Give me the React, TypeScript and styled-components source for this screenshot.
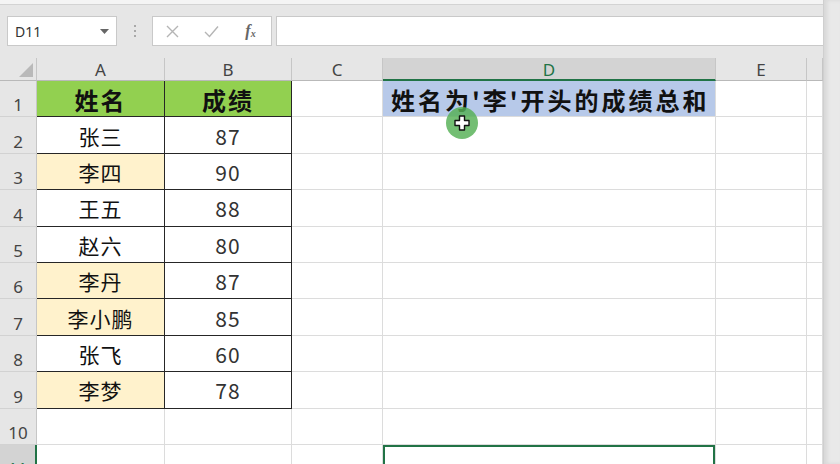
import React from 'react';
import styled, {createGlobalStyle} from 'styled-components';

const CJK = `'Noto Sans CJK SC', 'Noto Sans', sans-serif`;
const UI = `'Noto Sans', 'Liberation Sans', sans-serif`;
const GREEN = '#217346';

const GlobalStyle = createGlobalStyle`
  html, body {
    margin: 0;
    padding: 0;
    overflow: hidden;
    background: #e6e6e6;
  }
  * {
    box-sizing: border-box;
  }
`;

type Row = {name: string; score: string; li?: boolean};

const rows: Row[] = [
  {name: '张三', score: '87'},
  {name: '李四', score: '90', li: true},
  {name: '王五', score: '88'},
  {name: '赵六', score: '80'},
  {name: '李丹', score: '87', li: true},
  {name: '李小鹏', score: '85', li: true},
  {name: '张飞', score: '60'},
  {name: '李梦', score: '78', li: true},
];

const columns = ['A', 'B', 'C', 'D', 'E', ''];

const App: React.FC = () => {
  return (
    <>
      <GlobalStyle />
      <Window>
        <Main>
          <RibbonEdge />
          <FormulaBar>
            <NameBox>
              <span>D11</span>
              <svg width="9" height="5" viewBox="0 0 9 5">
                <polygon points="0,0 9,0 4.5,5" fill="#666" />
              </svg>
            </NameBox>
            <Grip>
              <i />
              <i />
              <i />
            </Grip>
            <FuncBox>
              <FuncIcon>
                <svg width="13" height="13" viewBox="0 0 13 13">
                  <path d="M1 1 L12 12 M12 1 L1 12" stroke="#b5b5b5" strokeWidth="1.4" fill="none" />
                </svg>
              </FuncIcon>
              <FuncIcon>
                <svg width="15" height="13" viewBox="0 0 15 13">
                  <path d="M1 7 L5.5 11.5 L14 1.5" stroke="#b5b5b5" strokeWidth="1.4" fill="none" />
                </svg>
              </FuncIcon>
              <FuncIcon>
                <FxLabel>
                  f<sub>x</sub>
                </FxLabel>
              </FuncIcon>
            </FuncBox>
            <FormulaInput />
          </FormulaBar>

          <Sheet>
            <Corner>
              <svg width="16" height="16" viewBox="0 0 16 16">
                <polygon points="15,1 15,15 1,15" fill="#b9b9b9" />
              </svg>
            </Corner>
            {columns.map((c, i) => (
              <ColHead key={i} $selected={c === 'D'}>
                {c}
              </ColHead>
            ))}

            {/* row 1: header */}
            <RowHead>1</RowHead>
            <Cell $fill="#92d050" $boxed $bold $size={24}>
              姓名
            </Cell>
            <Cell $fill="#92d050" $boxed $bold $size={24}>
              成绩
            </Cell>
            <Cell />
            <Cell $fill="#b7c9e9" $bold $size={24} $spacing={3} $align="left">
              姓名为'李'开头的成绩总和
            </Cell>
            <Cell />
            <Cell />

            {rows.map((r, i) => (
              <React.Fragment key={r.name}>
                <RowHead>{i + 2}</RowHead>
                <Cell $boxed $fill={r.li ? '#fff2cc' : '#ffffff'}>
                  {r.name}
                </Cell>
                <Cell $boxed $num>
                  {r.score}
                </Cell>
                <Cell />
                <Cell />
                <Cell />
                <Cell />
              </React.Fragment>
            ))}

            <RowHead>10</RowHead>
            <Cell />
            <Cell />
            <Cell />
            <Cell />
            <Cell />
            <Cell />

            <RowHead $selected>11</RowHead>
            <Cell />
            <Cell />
            <Cell />
            <Cell $active />
            <Cell />
            <Cell />
          </Sheet>
        </Main>
        <Gutter />

        <CursorHalo>
          <svg width="16" height="16" viewBox="0 0 16 16">
            <path
              d="M5.5 1 H10.5 V5.5 H15 V10.5 H10.5 V15 H5.5 V10.5 H1 V5.5 H5.5 Z"
              fill="#ffffff"
              stroke="#111"
              strokeWidth="1.4"
              strokeLinejoin="round"
            />
          </svg>
        </CursorHalo>
      </Window>
    </>
  );
};

const Window = styled.div`
  position: relative;
  width: 840px;
  height: 464px;
  display: flex;
  overflow: hidden;
  background: #e6e6e6;
`;

const Main = styled.div`
  width: 823px;
  display: flex;
  flex-direction: column;
`;

const Gutter = styled.div`
  width: 17px;
  background: #e9e9e9;
  border-left: 1px solid #cfcfcf;
  box-shadow: inset 3px 0 4px rgba(0, 0, 0, 0.08);
`;

const RibbonEdge = styled.div`
  height: 5px;
  background: #f4f4f4;
  border-bottom: 1px solid #d3d3d3;
`;

const FormulaBar = styled.div`
  height: 53px;
  display: flex;
  align-items: flex-start;
  padding: 11px 0 0 7px;
`;

const NameBox = styled.div`
  width: 110px;
  height: 30px;
  background: #fff;
  border: 1px solid #c9c9c9;
  display: flex;
  align-items: center;
  justify-content: space-between;
  padding: 0 7px 0 7px;
  font-family: ${UI};
  font-size: 14px;
  color: #333;
`;

const Grip = styled.div`
  width: 35px;
  height: 30px;
  display: flex;
  flex-direction: column;
  align-items: center;
  justify-content: center;
  gap: 3px;

  i {
    display: block;
    width: 2px;
    height: 2px;
    background: #a8a8a8;
  }
`;

const FuncBox = styled.div`
  width: 120px;
  height: 30px;
  background: #fff;
  border: 1px solid #c9c9c9;
  display: grid;
  grid-template-columns: repeat(3, 39px);
  align-items: center;
`;

const FuncIcon = styled.div`
  display: flex;
  justify-content: center;
  align-items: center;
`;

const FxLabel = styled.span`
  font-family: 'Liberation Serif', serif;
  font-style: italic;
  font-weight: 700;
  font-size: 16px;
  color: #666;

  sub {
    font-size: 10px;
    vertical-align: -1px;
  }
`;

const FormulaInput = styled.div`
  flex: 1;
  margin-left: 4px;
  height: 30px;
  background: #fff;
  border: 1px solid #c9c9c9;
  border-right: none;
`;

const Sheet = styled.div`
  flex: 1;
  display: grid;
  grid-template-columns: 37px 128px 127px 91px 333px 91px 16px;
  grid-template-rows: 23px repeat(11, 36.4px);
  background: #fff;
  overflow: hidden;
`;

const Corner = styled.div`
  background: #e6e6e6;
  border-right: 1px solid #c6c6c6;
  border-bottom: 1px solid #b9b9b9;
  display: flex;
  align-items: flex-end;
  justify-content: flex-end;
  padding: 0 2px 2px 0;
`;

const ColHead = styled.div<{$selected?: boolean}>`
  background: ${(p) => (p.$selected ? '#d3d3d3' : '#e6e6e6')};
  border-right: 1px solid #c6c6c6;
  border-bottom: ${(p) => (p.$selected ? `2px solid ${GREEN}` : '1px solid #b9b9b9')};
  display: flex;
  align-items: center;
  justify-content: center;
  font-family: ${UI};
  font-size: 17px;
  color: ${(p) => (p.$selected ? GREEN : '#444')};
  padding-top: 1px;
`;

const RowHead = styled.div<{$selected?: boolean}>`
  background: ${(p) => (p.$selected ? '#d3d3d3' : '#e6e6e6')};
  border-right: ${(p) => (p.$selected ? `2px solid ${GREEN}` : '1px solid #c6c6c6')};
  border-bottom: 1px solid #d2d2d2;
  display: flex;
  align-items: flex-end;
  justify-content: center;
  font-family: ${UI};
  font-size: 17px;
  line-height: 1;
  color: ${(p) => (p.$selected ? GREEN : '#444')};
  padding-bottom: 3px;
`;

type CellProps = {
  $fill?: string;
  $boxed?: boolean;
  $bold?: boolean;
  $size?: number;
  $spacing?: number;
  $align?: 'left' | 'center';
  $num?: boolean;
  $active?: boolean;
};

const Cell = styled.div<CellProps>`
  background: ${(p) => p.$fill || '#ffffff'};
  border-right: 1px solid ${(p) => (p.$boxed ? '#262626' : '#dcdcdc')};
  border-bottom: 1px solid ${(p) => (p.$boxed ? '#262626' : '#dcdcdc')};
  box-shadow: ${(p) => (p.$active ? `inset 0 0 0 2px ${GREEN}` : 'none')};
  display: flex;
  align-items: center;
  justify-content: ${(p) => (p.$align === 'left' ? 'flex-start' : 'center')};
  padding: ${(p) => (p.$align === 'left' ? '2px 0 0 8px' : '2px 0 0 0')};
  font-family: ${CJK};
  font-size: ${(p) => (p.$size ? `${p.$size}px` : '21px')};
  font-weight: ${(p) => (p.$bold ? 700 : 400)};
  letter-spacing: ${(p) => (p.$spacing ? `${p.$spacing}px` : p.$bold ? '2px' : '1px')};
  color: ${(p) => (p.$num ? '#333' : '#111')};
  white-space: nowrap;
  overflow: visible;
  line-height: 1;
`;

const CursorHalo = styled.div`
  position: absolute;
  left: 446px;
  top: 107px;
  width: 32px;
  height: 32px;
  border-radius: 50%;
  background: rgba(84, 176, 84, 0.82);
  display: flex;
  align-items: center;
  justify-content: center;
`;

export default App;
